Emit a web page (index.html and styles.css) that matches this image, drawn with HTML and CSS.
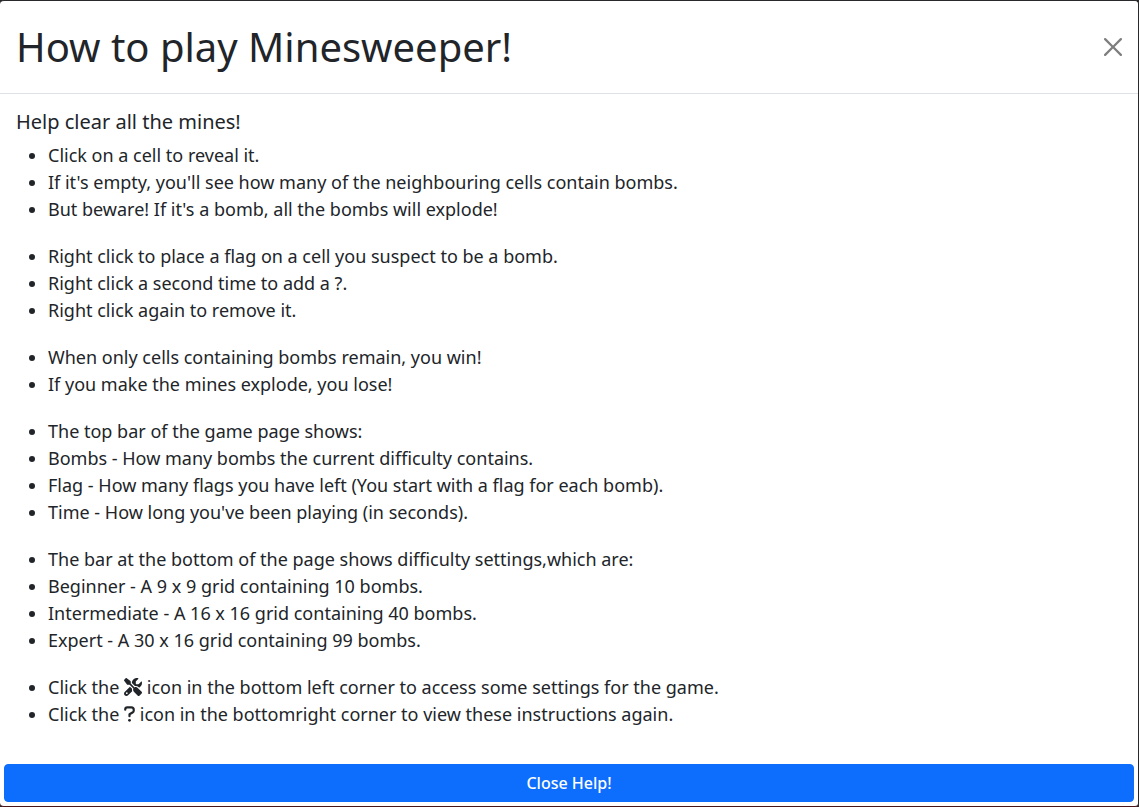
FILE: index.html
```html
<!DOCTYPE html>
<html lang="en">
<head>
<meta charset="utf-8">
<meta name="viewport" content="width=device-width, initial-scale=1">
<title>How to play Minesweeper!</title>
<link rel="stylesheet" href="styles.css">
</head>
<body>
<main class="modal" role="dialog" aria-labelledby="help-title">
  <header class="modal-header">
    <h1 class="modal-title" id="help-title">How to play Minesweeper!</h1>
    <button class="close-button" type="button" aria-label="Close">
      <svg class="close-icon" viewBox="0 0 16 16" aria-hidden="true"><path d="M.293.293a1 1 0 0 1 1.414 0L8 6.586 14.293.293a1 1 0 1 1 1.414 1.414L9.414 8l6.293 6.293a1 1 0 0 1-1.414 1.414L8 9.414l-6.293 6.293a1 1 0 0 1-1.414-1.414L6.586 8 .293 1.707a1 1 0 0 1 0-1.414z"/></svg>
    </button>
  </header>
  <section class="modal-body">
    <h2 class="intro">Help clear all the mines!</h2>
    <ul class="rules">
      <li>Click on a cell to reveal it.</li>
      <li>If it's empty, you'll see how many of the neighbouring cells contain bombs.</li>
      <li>But beware! If it's a bomb, all the bombs will explode!</li>
    </ul>
    <ul class="rules">
      <li>Right click to place a flag on a cell you suspect to be a bomb.</li>
      <li>Right click a second time to add a ?.</li>
      <li>Right click again to remove it.</li>
    </ul>
    <ul class="rules">
      <li>When only cells containing bombs remain, you win!</li>
      <li>If you make the mines explode, you lose!</li>
    </ul>
    <ul class="rules">
      <li>The top bar of the game page shows:</li>
      <li>Bombs - How many bombs the current difficulty contains.</li>
      <li>Flag - How many flags you have left (You start with a flag for each bomb).</li>
      <li>Time - How long you've been playing (in seconds).</li>
    </ul>
    <ul class="rules">
      <li>The bar at the bottom of the page shows difficulty settings,which are:</li>
      <li>Beginner - A 9 x 9 grid containing 10 bombs.</li>
      <li>Intermediate - A 16 x 16 grid containing 40 bombs.</li>
      <li>Expert - A 30 x 16 grid containing 99 bombs.</li>
    </ul>
    <ul class="rules">
      <li>Click the <svg class="icon tools" viewBox="0 0 512 512" aria-hidden="true"><path d="M78.600 5C69.100-2.400 55.600-1.500 47 7L7 47c-8.500 8.500-9.400 22-2.100 31.600l80 104c4.500 5.900 11.600 9.400 19 9.400h54.100l109 109c-14.700 29-10 65.400 14.300 89.600l112 112c12.500 12.500 32.800 12.500 45.300 0l64-64c12.500-12.500 12.500-32.800 0-45.300l-112-112c-24.200-24.200-60.600-29-89.600-14.300l-109-109V104c0-7.500-3.500-14.500-9.400-19L78.600 5zM19.900 396.100C7.200 408.800 0 426.100 0 444.100C0 481.600 30.400 512 67.900 512c18 0 35.300-7.200 48-19.900L233.700 374.300c-7.800-20.900-9-43.600-3.600-65.100l-61.700-61.700L19.900 396.100zM512 144c0-10.500-1.100-20.700-3.200-30.500c-2.400-11.200-16.100-14.100-24.200-6l-63.900 63.900c-3 3-7.100 4.700-11.300 4.700H352c-8.800 0-16-7.200-16-16V102.600c0-4.200 1.700-8.300 4.700-11.300l63.900-63.900c8.100-8.100 5.200-21.800-6-24.200C388.700 1.100 378.500 0 368 0C288.500 0 224 64.500 224 144l0 .8 85.300 85.300c36-9.100 75.800 .5 104 28.700L429 274.500c49-23 83-72.800 83-130.500zM104 432a24 24 0 1 1-48 0 24 24 0 1 1 48 0z"/></svg> icon in the bottom left corner to access some settings for the game.</li>
      <li>Click the <svg class="icon question" viewBox="0 0 320 512" aria-hidden="true"><path class="question-hook" d="M36 132V124A60 60 0 0 1 96 64H212A72 72 0 0 1 284 136V152A72 72 0 0 1 248 214L160 264V320"/><circle cx="160" cy="440" r="42"/></svg> icon in the bottomright corner to view these instructions again.</li>
    </ul>
  </section>
  <button class="confirm-button" type="button">Close Help!</button>
</main>
</body>
</html>
```
FILE: styles.css
```css
* { box-sizing: border-box; }

body {
  margin: 0;
  background: #29282b;
  color: #212529;
  font-family: "Noto Sans", sans-serif;
  font-size: 18px;
  line-height: 27px;
}

.modal {
  display: flex;
  flex-direction: column;
  min-height: 100vh;
  border: 1px solid #29282b;
  border-bottom-color: #4a1519;
  border-left: 0;
  border-radius: 4px;
  background: #fff;
}

.modal-header {
  display: flex;
  align-items: center;
  justify-content: space-between;
  padding: 16px;
  border-bottom: 1px solid #dee2e6;
}

.modal-title {
  margin: 0;
  font-size: 40px;
  font-weight: 400;
  line-height: 60px;
}

.close-button {
  display: flex;
  padding: 0;
  border: 0;
  background: none;
  cursor: pointer;
  opacity: 0.5;
}

.close-icon { width: 18px; height: 18px; }

.modal-body {
  flex: 1;
  padding: 16px 16px 0;
}

.intro {
  margin: 0 0 8px;
  font-size: 20px;
  font-weight: 400;
  line-height: 24px;
}

.rules {
  margin: 0 0 20px;
  padding-left: 32px;
}

.icon {
  height: 18px;
  vertical-align: -2px;
  fill: #212529;
}

.tools { width: 18px; }
.question { width: 11px; }

.question-hook {
  fill: none;
  stroke: #212529;
  stroke-width: 64;
  stroke-linecap: round;
  stroke-linejoin: round;
}

.confirm-button {
  margin: 4px;
  padding: 6px 12px;
  border: 1px solid #0d6efd;
  border-radius: 4px;
  background: #0d6efd;
  color: #fff;
  font: 500 16px/24px "Noto Sans", sans-serif;
  cursor: pointer;
}
```
